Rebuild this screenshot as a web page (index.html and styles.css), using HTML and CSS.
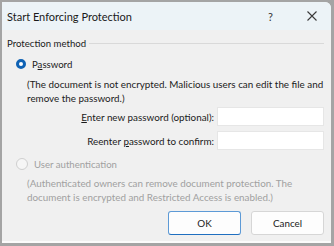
FILE: index.html
```html
<!DOCTYPE html>
<html>
<head>
<meta charset="utf-8">
<link rel="stylesheet" href="styles.css">
</head>
<body>
<div class="window">
  <div class="titlebar">
    <span class="title">Start Enforcing Protection</span>
    <span class="help">?</span>
    <span class="close">
      <svg width="10" height="10" viewBox="0 0 10 10"><path d="M0.5 0.5 L9.5 9.5 M9.5 0.5 L0.5 9.5" stroke="#3a3a3a" stroke-width="1.1" fill="none"/></svg>
    </span>
  </div>
  <div class="content">
    <div class="group-label"><span>Protection method</span><span class="rule"></span></div>
    <div class="option">
      <span class="radio checked"></span><span class="opt-text">P<u>a</u>ssword</span>
    </div>
    <p class="note">(The document is not encrypted. Malicious users can edit the file and remove the password.)</p>
    <div class="fields">
      <label class="flabel"><u>E</u>nter new password (optional):</label><span class="input"></span>
      <label class="flabel">Reenter <u>p</u>assword to confirm:</label><span class="input"></span>
    </div>
    <div class="option disabled">
      <span class="radio"></span><span class="opt-text">User authentication</span>
    </div>
    <p class="note disabled">(Authenticated owners can remove document protection. The document is encrypted and Restricted Access is enabled.)</p>
    <div class="buttons">
      <span class="btn primary">OK</span>
      <span class="btn">Cancel</span>
    </div>
  </div>
</div>
</body>
</html>
```
FILE: styles.css
```css
html, body {
  margin: 0;
  padding: 0;
}
body {
  background: #a4a4a4;
  width: 334px;
  height: 246px;
  overflow: hidden;
  font-family: Lato, "Noto Sans", sans-serif;
  font-size: 9.85px;
  color: #1b1b1b;
}
.window {
  margin: 2px 3px 0 2px;
  height: 239px;
  background: #f0f0f0;
  border-bottom: 2px solid #fbfbfb;
  border-top-right-radius: 6px;
  display: flex;
  flex-direction: column;
}
.titlebar {
  height: 28px;
  background: #ecf3f7;
  border-top-right-radius: 6px;
  display: flex;
  align-items: center;
  padding-left: 5px;
}
.title {
  font-size: 11px;
  flex: 1;
  color: #1a1a1a;
}
.help {
  font-size: 11px;
  width: 12px;
  margin-right: 27px;
  color: #333;
}
.close {
  display: flex;
  margin-right: 14px;
}
.content {
  padding: 6px 7px 0 5px;
  display: flex;
  flex-direction: column;
}
.group-label {
  display: flex;
  align-items: center;
  height: 14px;
  font-size: 9.6px;
}
.group-label .rule {
  flex: 1;
  height: 1px;
  background: #d9d9d9;
  margin-left: 3px;
  margin-top: 1px;
}
.option {
  display: flex;
  align-items: center;
  margin-top: 8px;
  padding-left: 9px;
  height: 12px;
  font-size: 9.6px;
}
.radio {
  width: 10px;
  height: 10px;
  border-radius: 50%;
  border: 1px solid #cfcfcf;
  background: #f6f6f6;
  box-sizing: content-box;
  margin-right: 6px;
}
.radio.checked {
  background: #fff;
  border: 3.5px solid #0f62b4;
  width: 4px;
  height: 4px;
}
.note {
  margin: 8px 0 0 20px;
  line-height: 13.5px;
}
.disabled {
  color: #a0a0a0;
}
.fields {
  display: grid;
  grid-template-columns: 1fr 107px;
  column-gap: 3px;
  row-gap: 5px;
  margin-top: 2px;
  align-items: center;
}
.flabel {
  text-align: right;
}
.input {
  background: #fff;
  border: 1px solid #e6e6e6;
  box-sizing: border-box;
  height: 19px;
}
.option.disabled {
  margin-top: 8px;
}
.note.disabled {
  margin-top: 7px;
}
.buttons {
  display: flex;
  justify-content: flex-end;
  gap: 10px;
  margin-top: 7px;
}
.btn {
  width: 73px;
  height: 24px;
  box-sizing: border-box;
  border: 1px solid #d6d6d6;
  border-radius: 3px;
  background: #fdfdfd;
  display: flex;
  align-items: center;
  justify-content: center;
}
.btn.primary {
  border-color: #5d9ad6;
  border-bottom-color: #1f6fc0;
}
```
